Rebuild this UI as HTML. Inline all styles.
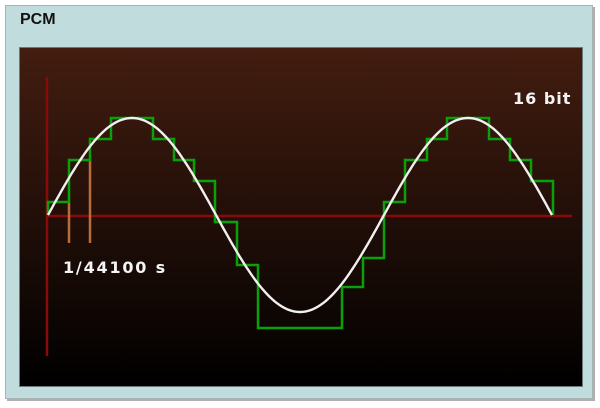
<!DOCTYPE html>
<html><head><meta charset="utf-8"><style>
html,body{margin:0;padding:0;background:#fff;width:600px;height:408px;overflow:hidden}
.p{position:absolute;left:5px;top:5px;width:586px;height:392px;background:#c1dcdc;border:1px solid #a8b4b4;box-shadow:2px 2px 0 #b0b0b0}
.t{position:absolute;left:14px;top:5px;font:bold 16px "Liberation Sans",sans-serif;color:#111}
.d{position:absolute;left:13px;top:41px;width:562px;height:338px;background:linear-gradient(#431d10,#000);border:1px solid #6a7a7a}
svg{position:absolute;left:0;top:0}
.lbl{font:bold 16px "DejaVu Sans",sans-serif;fill:#f4f4f4;letter-spacing:1.8px}
</style></head><body>
<div class="p"><div class="t">PCM</div><div class="d"></div></div>
<svg width="600" height="408">
<line x1="47" y1="77" x2="47" y2="356" stroke="#8a0a0a" stroke-width="2.5"/>
<line x1="47" y1="216" x2="572" y2="216" stroke="#8a0a0a" stroke-width="2.5"/>
<line x1="69" y1="202" x2="69" y2="243" stroke="#b86e3c" stroke-width="2.5"/>
<line x1="90" y1="160" x2="90" y2="243" stroke="#b86e3c" stroke-width="2.5"/>
<polyline fill="none" stroke="#0aa00a" stroke-width="2.5" points="48,215 48,202 69,202 69,160 90,160 90,139 111,139 111,118 153,118 153,139 174,139 174,160 194,160 194,181 215,181 215,222 237,222 237,265 258,265 258,328 342,328 342,287 363,287 363,258 384,258 384,202 405,202 405,160 427,160 427,139 447,139 447,118 489,118 489,139 510,139 510,160 531,160 531,181 553,181 553,215"/>
<polyline id="s" fill="none" stroke="#f0f0f0" stroke-width="2.4" points=""/>
<text class="lbl" x="63" y="273">1/44100 s</text>
<text class="lbl" x="513" y="104" style="letter-spacing:1px">16 bit</text>
</svg>
<script>
var p=[];for(var x=48;x<=552;x+=2){p.push(x+","+(215-97*Math.sin((x-48)*2*Math.PI/336)).toFixed(1));}
document.getElementById("s").setAttribute("points",p.join(" "));
</script>
</body></html>
